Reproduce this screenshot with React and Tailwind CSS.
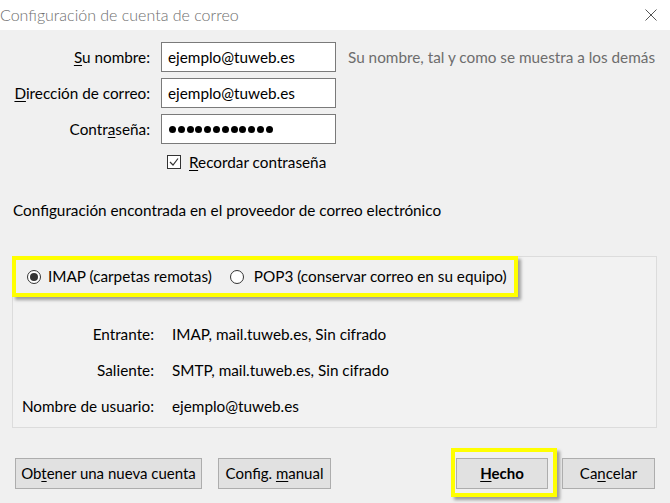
import React from 'react';

const U = ({ children }) => <span className="underline underline-offset-2">{children}</span>;

const Field = ({ label, children }) => (
  <>
    <div className="flex items-center justify-end h-[30px]">{label}</div>
    <div className="h-[30px] border border-[#7a7a7a] bg-white flex items-center pl-[6px]">{children}</div>
  </>
);

const Radio = ({ checked }) => (
  <span className="w-[14px] h-[14px] rounded-full border border-[#333] bg-white flex items-center justify-center">
    {checked && <span className="w-[8px] h-[8px] rounded-full bg-[#333]" />}
  </span>
);

const Btn = ({ children, className = '' }) => (
  <button className={`h-[31px] border border-[#adadad] bg-[#e1e1e1] text-[15px] text-black flex items-center justify-center ${className}`}>
    <span className="whitespace-pre">{children}</span>
  </button>
);

export default function App() {
  return (
    <div className="w-[670px] h-[503px] bg-[#f0f0f0] flex flex-col overflow-hidden text-black text-[15.3px]" style={{ fontFamily: 'Lato, "Liberation Sans", sans-serif' }}>
      <div className="h-[30px] bg-white flex items-center justify-between pr-[13px] shrink-0">
        <span className="text-[16px] font-light text-[#6e6e6e]">Configuración de cuenta de correo</span>
        <svg width="12" height="12" viewBox="0 0 12 12" stroke="#555" strokeWidth="1">
          <path d="M0.5 0.5 L11.5 11.5 M11.5 0.5 L0.5 11.5" />
        </svg>
      </div>

      <div className="pt-[12px] grid grid-cols-[150px_175px_auto] gap-x-[11px] gap-y-[6px]">
        <Field label={<span><U>S</U>u nombre:</span>}>ejemplo@tuweb.es</Field>
        <div className="flex items-center pl-px text-[#6d6d6d]">Su nombre, tal y como se muestra a los demás</div>
        <Field label={<span><U>D</U>irección de correo:</span>}>ejemplo@tuweb.es</Field>
        <div />
        <Field label={<span>Contr<U>a</U>seña:</span>}>
          <div className="flex gap-[1.8px] pl-px">
            {Array.from({ length: 12 }).map((_, i) => (
              <span key={i} className="w-[7px] h-[7px] rounded-full bg-black" />
            ))}
          </div>
        </Field>
        <div />
      </div>

      <div className="mt-[11px] ml-[167px] h-[14px] flex items-center gap-[8px]">
        <span className="w-[14px] h-[14px] border border-[#333] bg-white flex items-center justify-center">
          <svg width="10" height="10" viewBox="0 0 10 10" fill="none" stroke="#333" strokeWidth="1.2">
            <path d="M1 5 L4 8 L9 1.5" />
          </svg>
        </span>
        <span><U>R</U>ecordar contraseña</span>
      </div>

      <div className="mt-[30px] ml-[13px] leading-[22px]">Configuración encontrada en el proveedor de correo electrónico</div>

      <div className="mt-[35px] ml-[12px] w-[645px] h-[172px] border border-[#dcdcdc] bg-[#f2f2f2]">
        <div className="-mt-px -ml-px w-[506px] h-[41px] border-[4px] border-[#ffff00] shadow-[3px_3px_3px_rgba(0,0,0,0.35)] flex items-center pl-[11px] bg-[#f0f0f0]">
          <Radio checked />
          <span className="ml-[7px]">IMAP (carpetas remotas)</span>
          <span className="ml-[18px]"><Radio /></span>
          <span className="ml-[10px]">POP3 (conservar correo en su equipo)</span>
        </div>
        <div className="mt-[19px] grid grid-cols-[141px_auto] gap-x-[18px]">
          <div className="h-[36px] flex items-center justify-end">Entrante:</div>
          <div className="h-[36px] flex items-center">IMAP, mail.tuweb.es, Sin cifrado</div>
          <div className="h-[36px] flex items-center justify-end">Saliente:</div>
          <div className="h-[36px] flex items-center">SMTP, mail.tuweb.es, Sin cifrado</div>
          <div className="h-[36px] flex items-center justify-end">Nombre de usuario:</div>
          <div className="h-[36px] flex items-center">ejemplo@tuweb.es</div>
        </div>
      </div>

      <div className="mt-[20px] flex items-start pl-[15px] pr-[15px]">
        <Btn className="mt-[10px] w-[187px]">Ob<U>t</U>ener una nueva cuenta</Btn>
        <Btn className="mt-[10px] ml-[16px] w-[113px]">Config. <U>m</U>anual</Btn>
        <div className="ml-auto border-[4px] border-[#ffff00] shadow-[3px_3px_3px_rgba(0,0,0,0.35)] pl-px pr-[5px] pt-[6px] pb-[4px]">
          <Btn className="w-[92px] font-bold"><U>H</U>echo</Btn>
        </div>
        <Btn className="mt-[10px] ml-[5px] w-[93px]">Ca<U>n</U>celar</Btn>
      </div>
    </div>
  );
}
